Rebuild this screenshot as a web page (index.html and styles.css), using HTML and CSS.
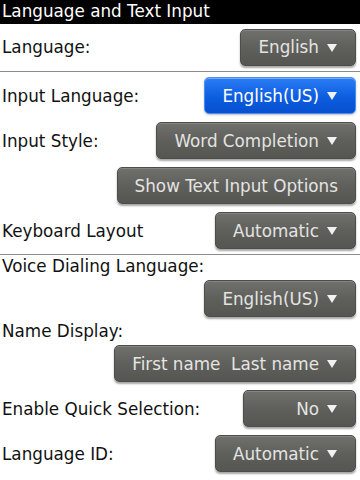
FILE: index.html
```html
<!DOCTYPE html>
<html lang="en">
<head>
    <meta charset="UTF-8">
    <meta name="viewport" content="width=device-width, initial-scale=1.0">
    <title>Language and Text Input</title>
    <link rel="stylesheet" href="styles.css">
</head>
<body>
    <div class="screen">
        <div class="title">Language and Text Input</div>

        <div class="row first">
            <span class="label">Language:</span>
            <button class="choice">English <span class="arrow"></span></button>
        </div>

        <div class="separator"></div>

        <div class="row">
            <span class="label">Input Language:</span>
            <button class="choice focused">English(US) <span class="arrow"></span></button>
        </div>
        <div class="row">
            <span class="label">Input Style:</span>
            <button class="choice">Word Completion <span class="arrow"></span></button>
        </div>
        <div class="row end">
            <button class="choice plain">Show Text Input Options</button>
        </div>
        <div class="row">
            <span class="label">Keyboard Layout</span>
            <button class="choice">Automatic <span class="arrow"></span></button>
        </div>

        <div class="separator"></div>

        <div class="label-row">Voice Dialing Language:</div>
        <div class="row end">
            <button class="choice">English(US) <span class="arrow"></span></button>
        </div>
        <div class="label-row">Name Display:</div>
        <div class="row end">
            <button class="choice">First name&nbsp; Last name <span class="arrow"></span></button>
        </div>
        <div class="row">
            <span class="label">Enable Quick Selection:</span>
            <button class="choice narrow">No <span class="arrow"></span></button>
        </div>
        <div class="row">
            <span class="label">Language ID:</span>
            <button class="choice">Automatic <span class="arrow"></span></button>
        </div>
    </div>
</body>
</html>
```

FILE: styles.css
```css
* {
    margin: 0;
    padding: 0;
    box-sizing: border-box;
}

body {
    background: #fff;
    font-family: 'DejaVu Sans', 'Liberation Sans', sans-serif;
    font-size: 16.8px;
    color: #111;
    width: 360px;
    height: 480px;
    overflow: hidden;
}

.screen {
    display: flex;
    flex-direction: column;
}

.title {
    height: 24px;
    line-height: 22px;
    background: #000;
    color: #fff;
    padding-left: 2px;
}

.row {
    height: 45px;
    display: flex;
    align-items: center;
    justify-content: space-between;
    padding: 0 4px 0 2px;
}

.row.first {
    height: 46px;
}

.row.end {
    justify-content: flex-end;
}

.label-row {
    padding-left: 2px;
    display: flex;
    align-items: center;
    height: 20px;
}

.separator {
    height: 1px;
    margin: 1px 0;
    background: #8c8c8c;
}

.choice {
    height: 37px;
    display: flex;
    align-items: center;
    justify-content: flex-end;
    gap: 8px;
    padding: 0 18px 0 17px;
    border: 1px solid #4d4e4a;
    border-radius: 5px;
    background: linear-gradient(#70716c, #5f605b 50%, #555651);
    box-shadow: 0 2px 2px rgba(0, 0, 0, 0.35), inset 0 1px 0 rgba(255, 255, 255, 0.15);
    color: #e4e4e2;
    font-family: inherit;
    font-size: 16.8px;
    white-space: nowrap;
}

.choice.focused {
    border-color: #4a8ef0;
    background: linear-gradient(#2b7df5, #0d5de0 55%, #0650d0);
    color: #fff;
    box-shadow: 0 1px 2px rgba(0, 0, 0, 0.25), inset 0 1px 0 rgba(255, 255, 255, 0.35);
}

.choice.plain {
    padding: 0 17px;
}

.choice.narrow {
    width: 113px;
}

.arrow {
    width: 0;
    height: 0;
    border-left: 5px solid transparent;
    border-right: 5px solid transparent;
    border-top: 8px solid #f2f2f2;
    margin-top: 1px;
}
```
